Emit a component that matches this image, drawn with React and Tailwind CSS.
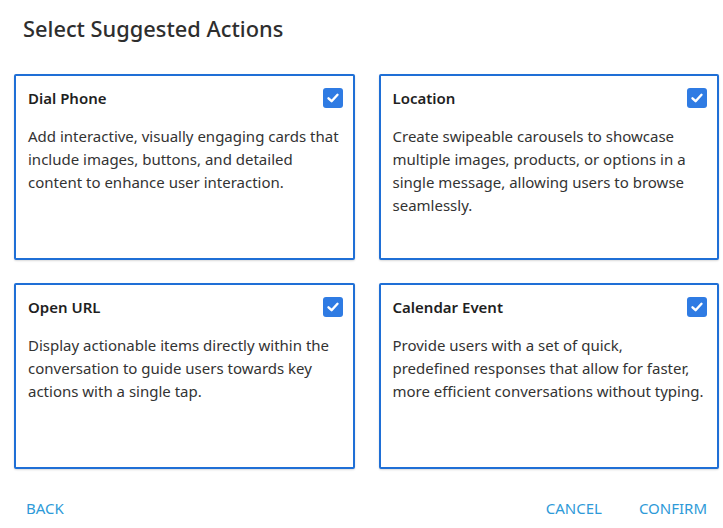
import React from "react";

const cards = [
  {
    title: "Dial Phone",
    lines: [
      "Add interactive, visually engaging cards that",
      "include images, buttons, and detailed",
      "content to enhance user interaction.",
    ],
  },
  {
    title: "Location",
    lines: [
      "Create swipeable carousels to showcase",
      "multiple images, products, or options in a",
      "single message, allowing users to browse",
      "seamlessly.",
    ],
  },
  {
    title: "Open URL",
    lines: [
      "Display actionable items directly within the",
      "conversation to guide users towards key",
      "actions with a single tap.",
    ],
  },
  {
    title: "Calendar Event",
    lines: [
      "Provide users with a set of quick,",
      "predefined responses that allow for faster,",
      "more efficient conversations without typing.",
    ],
  },
];

function Check() {
  return (
    <div className="w-[20px] h-[20px] rounded-[3px] bg-[#2f7be3] flex items-center justify-center shrink-0">
      <svg width="14" height="14" viewBox="0 0 14 14" fill="none">
        <path d="M2.5 7.3 L5.6 10.2 L11.5 3.8" stroke="white" strokeWidth="2.4" strokeLinecap="round" strokeLinejoin="round" />
      </svg>
    </div>
  );
}

function Card({ title, lines }) {
  return (
    <div className="h-[186px] border-2 border-[#1f6fd6] rounded-[2px] pl-[12px] pr-[10px] pt-[11px] bg-white shadow-[0_1px_2px_rgba(0,0,0,0.15)]">
      <div className="flex items-center justify-between h-[22px]">
        <span className="text-[15px] leading-[22px] font-semibold text-[#1f1f1f]">{title}</span>
        <Check />
      </div>
      <div className="mt-[16px] text-[15px] leading-[23px] text-[#333333] whitespace-nowrap">
        {lines.map((l, i) => (
          <div key={i}>{l}</div>
        ))}
      </div>
    </div>
  );
}

export default function App() {
  return (
    <div
      className="w-[723px] h-[528px] bg-white overflow-hidden"
      style={{ fontFamily: '"Noto Sans", "Open Sans", sans-serif' }}
    >
      <div className="pl-[23px] pt-[14px] text-[21.8px] leading-[30px] font-medium text-[#2e2e2e]">
        Select Suggested Actions
      </div>
      <div className="mt-[30px] pl-[14px] pr-[4px] grid grid-cols-2 gap-x-[24px] gap-y-[23px]">
        {cards.map((c) => (
          <Card key={c.title} {...c} />
        ))}
      </div>
      <div className="mt-[27px] pl-[26px] pr-[16px] flex items-center justify-between text-[15px] leading-[24px] text-[#2e9ad8]">
        <span>BACK</span>
        <div className="flex items-center gap-[37px]">
          <span>CANCEL</span>
          <span>CONFIRM</span>
        </div>
      </div>
    </div>
  );
}
